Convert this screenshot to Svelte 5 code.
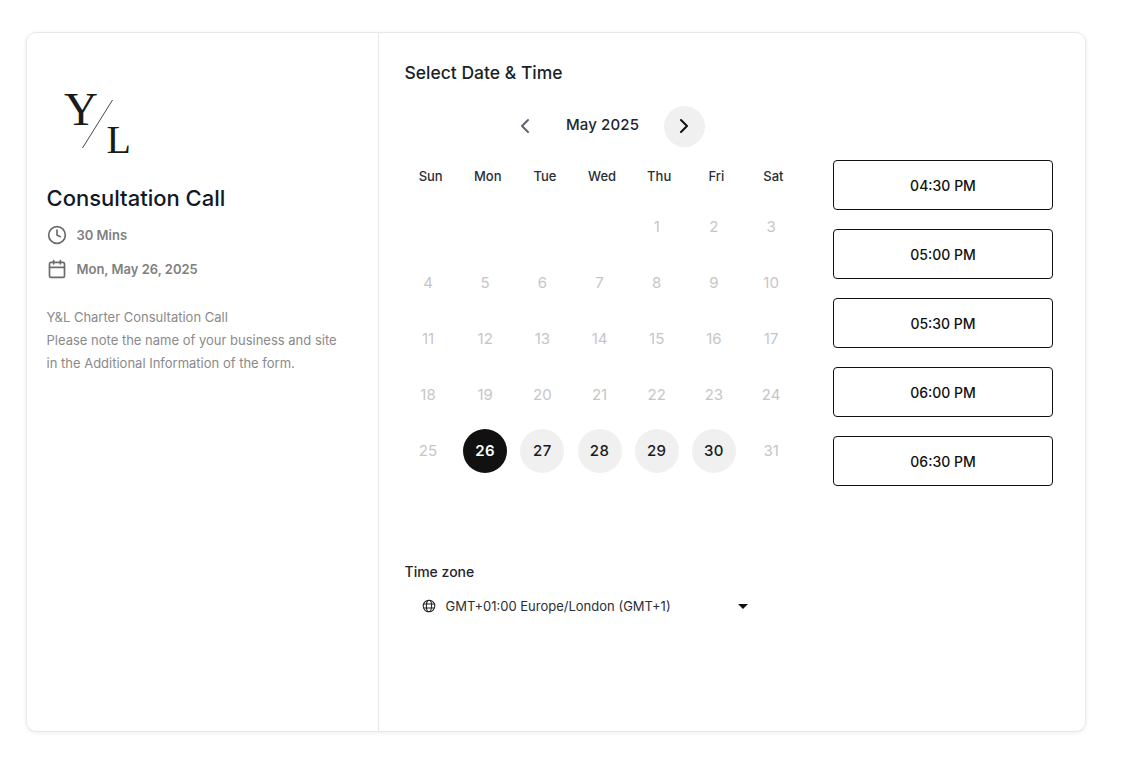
<script>
  const weekdays = ["Sun", "Mon", "Tue", "Wed", "Thu", "Fri", "Sat"];
  const blanks = [0, 1, 2, 3];
  const days = Array.from({ length: 31 }, (_, i) => i + 1);
  const slots = ["04:30 PM", "05:00 PM", "05:30 PM", "06:00 PM", "06:30 PM"];
  const selected = 26;
  const available = [27, 28, 29, 30];

  function dayClass(day) {
    if (day === selected) return "day selected";
    if (available.includes(day)) return "day available";
    return "day";
  }
</script>

<div class="page">
  <div class="card">
    <aside class="details">
      <div class="logo">
        <span class="logo-y">Y</span>
        <svg class="logo-slash" width="34" height="54" viewBox="0 0 34 54">
          <line x1="31.5" y1="1" x2="1.5" y2="49" stroke="#333" stroke-width="0.9" />
        </svg>
        <span class="logo-l">L</span>
      </div>
      <h1>Consultation Call</h1>
      <div class="meta first">
        <svg width="20" height="20" viewBox="0 0 24 24" fill="none" stroke="#6b6b6b" stroke-width="2" stroke-linecap="round" stroke-linejoin="round">
          <circle cx="12" cy="12" r="10" />
          <path d="M12 6v6l4 2" />
        </svg>
        <span>30 Mins</span>
      </div>
      <div class="meta">
        <svg width="20" height="20" viewBox="0 0 24 24" fill="none" stroke="#6b6b6b" stroke-width="2" stroke-linecap="round" stroke-linejoin="round">
          <rect x="3" y="4" width="18" height="18" rx="2" />
          <path d="M16 2v4M8 2v4M3 10h18" />
        </svg>
        <span>Mon, May 26, 2025</span>
      </div>
      <p class="desc">
        Y&amp;L Charter Consultation Call<br />
        Please note the name of your business and site<br />
        in the Additional Information of the form.
      </p>
    </aside>

    <main class="picker">
      <h2>Select Date &amp; Time</h2>
      <div class="month-nav">
        <button class="nav prev" aria-label="Previous month">
          <svg width="24" height="24" viewBox="0 0 24 24" fill="none" stroke="#5f6470" stroke-width="2" stroke-linecap="round" stroke-linejoin="round"><path d="m15 18-6-6 6-6" /></svg>
        </button>
        <span class="month">May 2025</span>
        <button class="nav next" aria-label="Next month">
          <svg width="24" height="24" viewBox="0 0 24 24" fill="none" stroke="#111" stroke-width="2" stroke-linecap="round" stroke-linejoin="round"><path d="m9 18 6-6-6-6" /></svg>
        </button>
      </div>
      <div class="columns">
        <div class="calendar">
          <div class="weekdays">
            {#each weekdays as name}
              <span>{name}</span>
            {/each}
          </div>
          <div class="days">
            {#each blanks as b}
              <span class="blank" data-b={b}></span>
            {/each}
            {#each days as day}
              <div class="cell"><span class={dayClass(day)}>{day}</span></div>
            {/each}
          </div>
        </div>
        <div class="slots">
          {#each slots as slot}
            <button class="slot">{slot}</button>
          {/each}
        </div>
      </div>
      <div class="zone">
        <div class="zone-label">Time zone</div>
        <div class="zone-select">
          <svg width="14" height="14" viewBox="0 0 24 24" fill="none" stroke="#222" stroke-width="1.8">
            <circle cx="12" cy="12" r="10" />
            <ellipse cx="12" cy="12" rx="4.5" ry="10" />
            <path d="M2.5 8.5h19M2.5 15.5h19" />
          </svg>
          <span class="zone-text">GMT+01:00 Europe/London (GMT+1)</span>
          <span class="caret"></span>
        </div>
      </div>
    </main>
  </div>
</div>

<style>
  :global(body) {
    margin: 0;
    background: #fff;
    font-family: Inter, "Liberation Sans", sans-serif;
    color: #111827;
  }

  .page {
    width: 1132px;
    height: 767px;
    padding: 32px 0 0 26px;
    box-sizing: border-box;
  }

  .card {
    width: 1060px;
    height: 700px;
    box-sizing: border-box;
    display: flex;
    background: #fff;
    border: 1px solid #e8e8e8;
    border-radius: 10px;
    box-shadow: 0 1px 4px rgba(0, 0, 0, 0.07);
  }

  .details {
    width: 352px;
    flex: none;
    box-sizing: border-box;
    padding: 0 19.5px;
    border-right: 1px solid #e6e6e6;
  }

  .logo {
    position: relative;
    height: 149px;
  }

  .logo span {
    position: absolute;
    font-family: "Liberation Serif", serif;
    color: #1a1a1a;
    line-height: 1;
  }

  .logo-y {
    left: 17.5px;
    top: 52.6px;
    font-size: 47px;
  }

  .logo-l {
    left: 60px;
    top: 86.5px;
    font-size: 40px;
  }

  .logo-slash {
    position: absolute;
    left: 34px;
    top: 66px;
  }

  h1 {
    margin: 0;
    font-size: 22px;
    line-height: 32px;
    font-weight: 450;
    color: #111827;
  }

  .meta {
    display: flex;
    align-items: center;
    gap: 10px;
    height: 20px;
    margin-top: 14px;
    font-size: 13px;
    font-weight: 600;
    color: #7f7f7f;
  }

  .meta.first {
    margin-top: 11px;
  }

  .desc {
    margin: 27px 0 0;
    font-size: 13px;
    line-height: 23px;
    color: #8a8a8a;
  }

  .picker {
    flex: 1;
    min-width: 0;
    padding-left: 25.5px;
  }

  h2 {
    margin: 28px 0 0;
    font-size: 17.5px;
    line-height: 24px;
    font-weight: 450;
    color: #1c1f26;
  }

  .month-nav {
    display: flex;
    align-items: center;
    width: 400px;
    height: 42px;
    margin-top: 20px;
    padding-left: 99px;
    box-sizing: border-box;
  }

  .nav {
    width: 42px;
    height: 42px;
    flex: none;
    padding: 0;
    border: 0;
    border-radius: 50%;
    background: transparent;
    display: flex;
    align-items: center;
    justify-content: center;
  }

  .nav.next {
    width: 41px;
    height: 41px;
    background: #f0f0f0;
  }

  .nav svg {
    margin-top: -1px;
  }

  .month {
    width: 118px;
    box-sizing: border-box;
    padding-right: 4px;
    padding-bottom: 3px;
    text-align: center;
    font-size: 15px;
    font-weight: 450;
    letter-spacing: 0.15px;
    color: #22252d;
  }

  .columns {
    display: flex;
    margin-top: 14px;
    margin-left: -6px;
  }

  .calendar {
    width: 400px;
    flex: none;
  }

  .weekdays {
    display: grid;
    grid-template-columns: repeat(7, 57.14px);
    padding-left: 3.6px;
    height: 38px;
    align-items: start;
    font-size: 13px;
    line-height: 20px;
    font-weight: 450;
    color: #2b2e36;
    text-align: center;
  }

  .weekdays span {
    margin-top: 5px;
  }

  .days {
    display: grid;
    grid-template-columns: repeat(7, 57.2px);
    grid-auto-rows: 56px;
    margin-top: -0.5px;
    padding-left: 0.9px;
  }

  .cell {
    display: flex;
    align-items: center;
    justify-content: center;
  }

  .day {
    width: 44px;
    height: 44px;
    border-radius: 50%;
    display: flex;
    align-items: center;
    justify-content: center;
    font-size: 15px;
    color: #c6c6c6;
  }

  .day.available {
    background: #f0f0f0;
    color: #1a1a1a;
    font-weight: 500;
    letter-spacing: 0.5px;
  }

  .day.selected {
    background: #111;
    color: #fff;
    font-weight: 600;
    letter-spacing: 0.4px;
  }

  .slots {
    display: flex;
    flex-direction: column;
    gap: 19px;
    margin-left: 34.5px;
    margin-top: -1px;
  }

  .slot {
    width: 220px;
    height: 50px;
    padding: 0;
    background: #fff;
    border: 1px solid #111;
    border-radius: 4px;
    font-family: inherit;
    font-size: 14px;
    font-weight: 450;
    color: #111;
  }

  .zone {
    margin-top: 76px;
  }

  .zone-label {
    font-size: 14px;
    line-height: 20px;
    font-weight: 450;
    color: #22252d;
  }

  .zone-select {
    display: flex;
    align-items: center;
    height: 20px;
    margin-top: 14px;
    padding-left: 17px;
    font-size: 13px;
    color: #2b2e36;
  }

  .zone-text {
    margin-left: 10px;
    width: 292px;
  }

  .caret {
    width: 0;
    height: 0;
    border-left: 5px solid transparent;
    border-right: 5px solid transparent;
    border-top: 5px solid #111;
  }
</style>
